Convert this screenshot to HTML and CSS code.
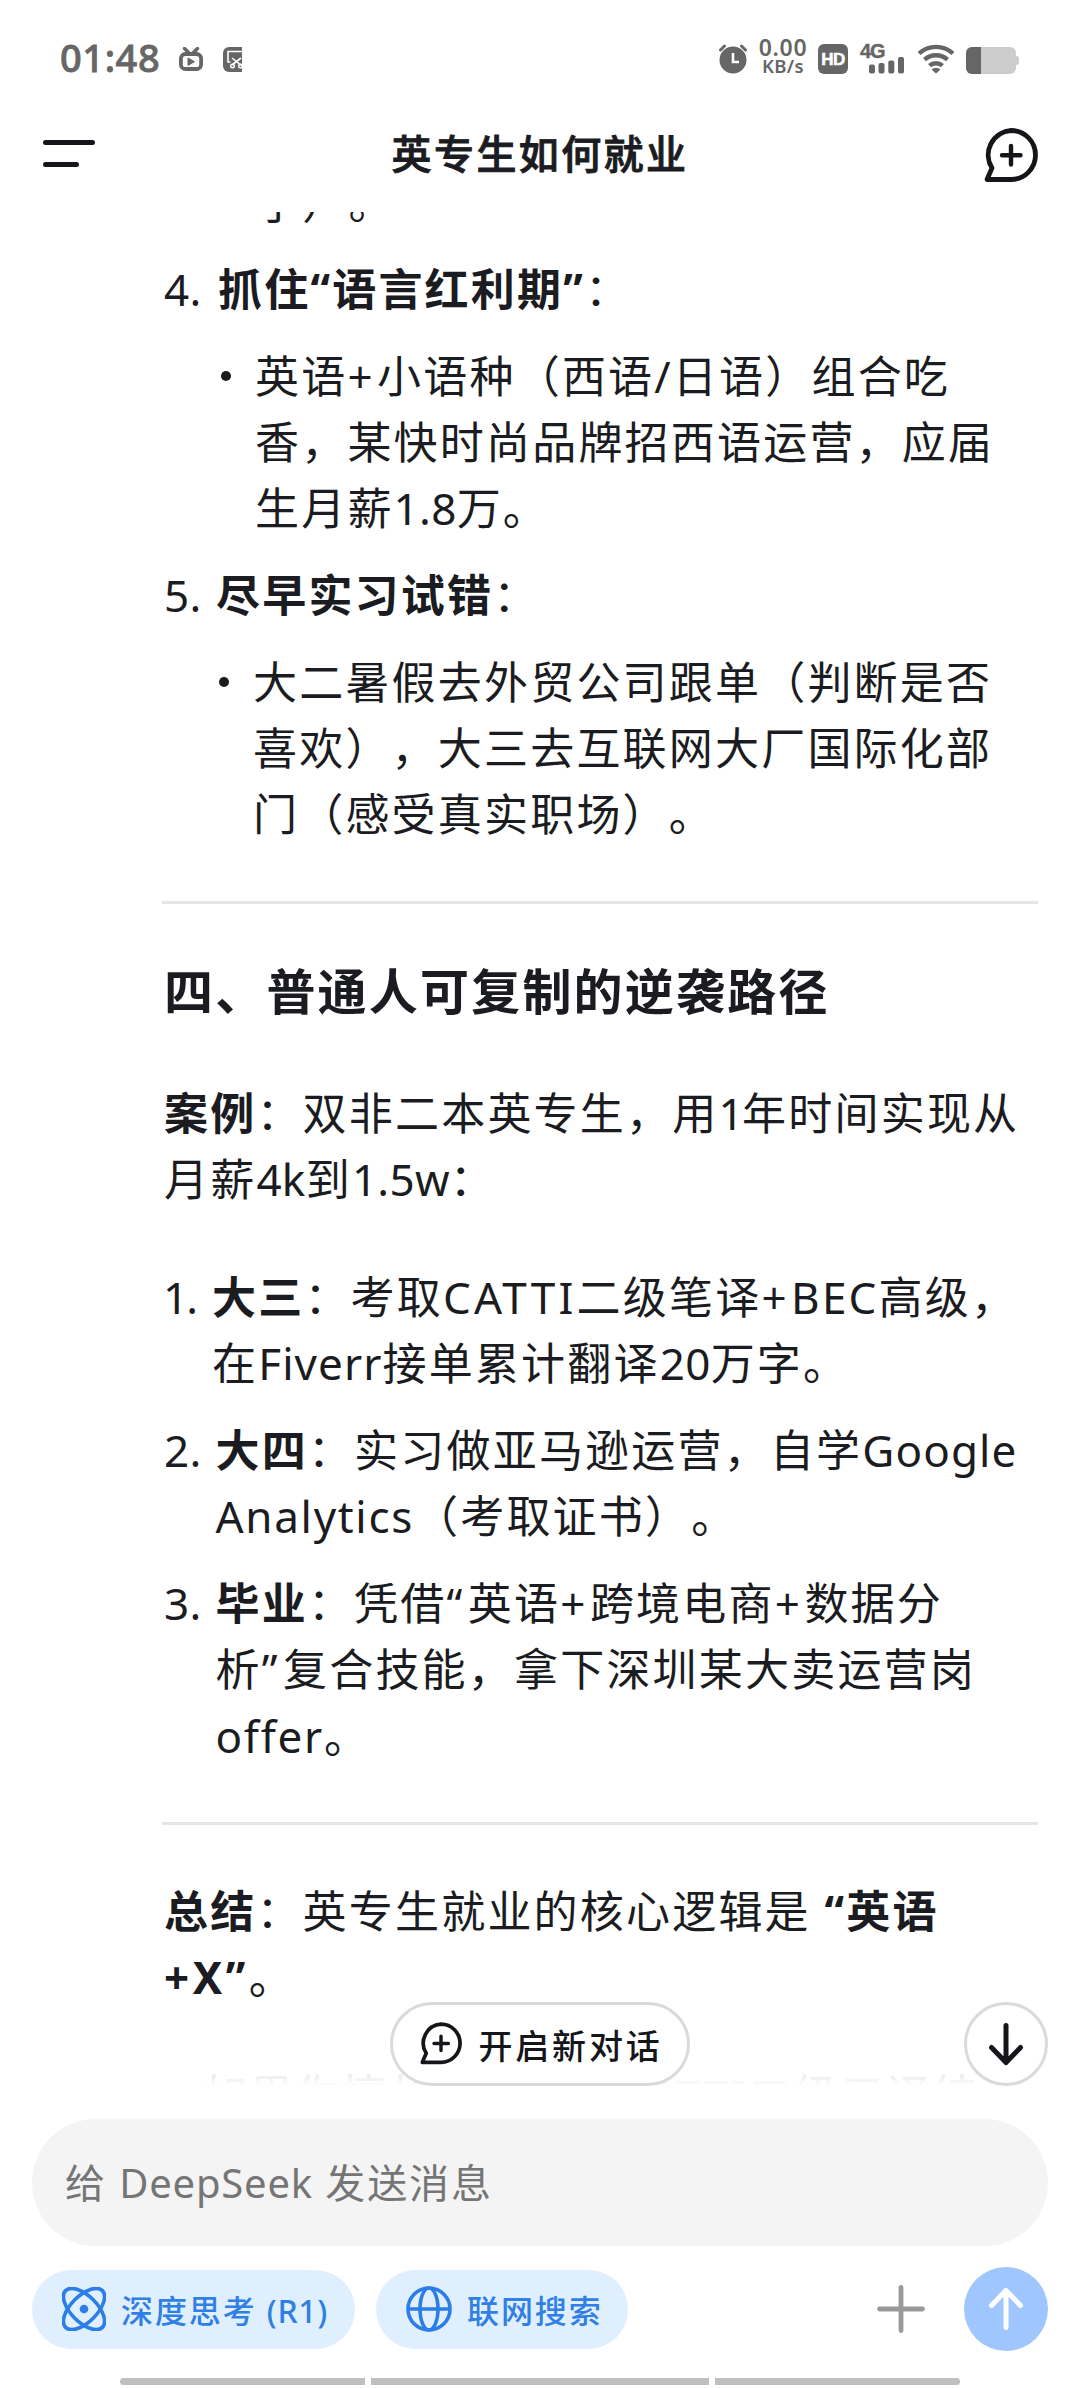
FILE: index.html
```html
<!DOCTYPE html>
<html lang="zh-CN">
<head>
<meta charset="utf-8">
<title>英专生如何就业</title>
<link rel="stylesheet" href="styles.css">
</head>
<body>
<div class="app">
  <div class="status">
    <span class="clock">01:48</span>
    <svg class="tv" width="24" height="24" viewBox="0 0 24 24"><path d="M5.500 1.500l5 5M18.500 1.500l-5 5" stroke="#666" stroke-width="3.400" stroke-linecap="round"/><rect x="1.900" y="7" width="20.200" height="15" rx="4.500" fill="none" stroke="#666" stroke-width="3.800"/><path d="M9 11v7.400l6.500-3.700z" fill="#666" stroke="#666" stroke-linejoin="round"/></svg>
    <svg class="snip" width="19" height="25" viewBox="0 0 19 25"><path d="M6 0h13v25H6a6 6 0 0 1-6-6V6a6 6 0 0 1 6-6z" fill="#666"/><path d="M19 4.500H5V15h2.500M9 11l10 8M18 11l-9 7" fill="none" stroke="#fff" stroke-width="1.600"/><circle cx="9.500" cy="19" r="1.800" fill="none" stroke="#fff" stroke-width="1.400"/><circle cx="17.500" cy="19" r="1.800" fill="none" stroke="#fff" stroke-width="1.400"/></svg>
    <span class="spacer"></span>
    <svg class="alarm" width="30" height="30" viewBox="0 0 30 30"><circle cx="15" cy="16" r="13.500" fill="#666"/><path d="M2.500 6l4-4M27.500 6l-4-4" stroke="#666" stroke-width="3" stroke-linecap="round"/><path d="M15 9v9h6" fill="none" stroke="#fff" stroke-width="2.600"/></svg>
    <span class="speed"><b>0.00</b><i>KB/s</i></span>
    <span class="hd">HD</span>
    <span class="cell"><b>4G</b><svg width="36" height="17" viewBox="0 0 36 17" fill="#666"><rect x="0" y="7.500" width="6" height="9" rx="2"/><rect x="9.500" y="6" width="6" height="10.500" rx="2"/><rect x="19.300" y="3.500" width="6" height="13" rx="2"/><rect x="29" y="0" width="6" height="16.500" rx="2"/></svg></span>
    <svg class="wifi" width="38" height="30" viewBox="0 0 38 30"><g fill="none" stroke="#666" stroke-width="4.400"><path d="M2 9.500a25 25 0 0 1 34 0"/><path d="M7.500 15.700a17 17 0 0 1 23 0"/><path d="M12.500 21.700a10 10 0 0 1 13 0"/></g><path d="M14.500 25.500q4.500-3.500 9 0L19 29.500z" fill="#666"/></svg>
    <span class="battery"><span class="level"></span></span>
  </div>
  <header class="header">
    <svg class="menu" width="54" height="28" viewBox="0 0 54 28"><path d="M3.500 2.500h47M3.500 24.500h31" stroke="#15161a" stroke-width="5" stroke-linecap="round"/></svg>
    <h1 class="title">英专生如何就业</h1>
    <svg class="new" width="54" height="56" viewBox="0 0 54 56"><path d="M27 2.500a24.500 24.500 0 1 1 0 49H3l5-11.500A24.500 24.500 0 0 1 27 2.500z" fill="none" stroke="#15161a" stroke-width="4.800" stroke-linejoin="round"/><path d="M27 18v18.500M18 27.300h18.500" stroke="#15161a" stroke-width="4.400" stroke-linecap="round"/></svg>
  </header>
  <main class="chat">
    <div class="answer">
      <p class="tail">了）。</p>
      <div class="item w4"><span class="num">4.</span><div class="body">
        <p><strong>抓住“语言红利期”</strong>：</p>
        <div class="bullet"><p>英语<span class="plus">+</span>小语种（西语/日语）组合吃<br>香，某快时尚品牌招西语运营，应届<br>生月薪<span class="digits">1.8</span>万。</p></div>
      </div></div>
      <div class="item w5"><span class="num">5.</span><div class="body">
        <p><strong>尽早实习试错</strong>：</p>
        <div class="bullet"><p>大二暑假去外贸公司跟单（判断是否<br>喜欢），大三去互联网大厂国际化部<br>门（感受真实职场）。</p></div>
      </div></div>
      <hr class="rule">
      <h2 class="heading">四、普通人可复制的逆袭路径</h2>
      <p class="para"><strong>案例</strong>：双非二本英专生，用<span class="one">1</span>年时间实现从<br>月薪<span class="digits">4k</span>到<span class="digits">1.5w</span>：</p>
      <div class="item w1"><span class="num">1.</span><p><strong>大三</strong>：考取<span class="caps">CATTI</span>二级笔译<span class="plus">+</span>BEC高级，<br>在<span class="latin">Fiverr</span>接单累计翻译<span class="digits">20</span>万字。</p></div>
      <div class="item w2"><span class="num">2.</span><p><strong>大四</strong>：实习做亚马逊运营，自学<span class="latin">Google</span><br><span class="word">Analytics</span>（考取证书）。</p></div>
      <div class="item w2"><span class="num">3.</span><p><strong>毕业</strong>：凭借<span class="quote">“</span>英语<span class="plus">+</span>跨境电商<span class="plus">+</span>数据分<br>析<span class="quote">”</span>复合技能，拿下深圳某大卖运营岗<br><span class="word">offer</span>。</p></div>
      <hr class="rule second">
      <p class="summary"><strong>总结</strong>：英专生就业的核心逻辑是 <strong>“英语<br><span class="wide">+X”</span></strong>。</p>
      <p class="next">如果你擅长考试，有CATTI二级口译结</p>
    </div>
    <div class="fade"></div>
    <button class="fresh"><svg width="42" height="44" viewBox="0 0 54 56"><path d="M27 2.500a24.500 24.500 0 1 1 0 49H3l5-11.500A24.500 24.500 0 0 1 27 2.500z" fill="none" stroke="#15161a" stroke-width="4.800" stroke-linejoin="round"/><path d="M27 18v18.500M18 27.300h18.500" stroke="#15161a" stroke-width="4.400" stroke-linecap="round"/></svg>开启新对话</button>
    <button class="down"><svg width="36" height="44" viewBox="0 0 36 44"><path d="M18 3.500v37M3.500 25.500L18 40.500l14.500-15" fill="none" stroke="#15161a" stroke-width="5" stroke-linecap="round" stroke-linejoin="round"/></svg></button>
  </main>
  <footer class="composer">
    <div class="input">给 <span class="brand">DeepSeek</span> 发送消息</div>
    <div class="tools">
      <button class="chip think"><svg width="44" height="44" viewBox="0 0 44 44"><g fill="none" stroke="#2b7de9" stroke-width="3.600"><ellipse cx="22" cy="22" rx="26" ry="13" transform="rotate(45 22 22)"/><ellipse cx="22" cy="22" rx="26" ry="13" transform="rotate(-45 22 22)"/></g><circle cx="22" cy="22" r="4.300" fill="#2b7de9"/></svg><span>深度思考 <span class="tight">(R1)</span></span></button>
      <button class="chip web"><svg width="46" height="46" viewBox="0 0 46 46"><g fill="none" stroke="#2b7de9" stroke-width="3.600"><circle cx="23" cy="23" r="21"/><ellipse cx="23" cy="23" rx="9" ry="21"/><path d="M2 23h42"/></g></svg>联网搜索</button>
      <svg class="add" width="48" height="48" viewBox="0 0 48 48"><path d="M24 2.500v43M2.500 24h43" stroke="#999" stroke-width="4.800" stroke-linecap="round"/></svg>
      <button class="send"><svg width="36" height="44" viewBox="0 0 36 44"><path d="M18 40.500v-37M3.500 18.500L18 3.500l14.500 15" fill="none" stroke="#fff" stroke-width="5" stroke-linecap="round" stroke-linejoin="round"/></svg></button>
    </div>
    <div class="navbar"><span></span><span></span><span></span></div>
  </footer>
</div>
</body>
</html>
```
FILE: styles.css
```css
* { box-sizing: border-box; }
body {
  margin: 0;
  background: #fff;
  color: #1b1c21;
  font-family: "Noto Sans", "Noto Sans CJK SC", sans-serif;
  text-spacing-trim: space-all;
}
p, h1, h2 { margin: 0; }
button {
  padding: 0;
  border: 0;
  font-family: inherit;
  background: none;
}
svg { display: block; flex: none; }

.app {
  display: flex;
  flex-direction: column;
  width: 1080px;
  height: 2388px;
  overflow: hidden;
}

/* status bar */
.status {
  display: flex;
  align-items: center;
  height: 118px;
  padding: 0 61px 0 60px;
  color: #666;
}
.clock { width: 119px; font-size: 38px; font-weight: 500; letter-spacing: .6px; line-height: 50px; margin-top: -4px; -webkit-text-stroke: .8px #666; }
.snip { margin-left: 20px; }
.spacer { flex: 1; }
.speed { display: flex; flex-direction: column; align-items: center; width: 54px; margin-left: 8px; margin-top: -4px; }
.speed b { font-size: 23px; font-weight: 600; line-height: 18px; letter-spacing: .7px; }
.speed i { font-size: 18.500px; font-style: normal; font-weight: 600; line-height: 20px; letter-spacing: .3px; }
.hd {
  width: 30px;
  height: 30px;
  margin-left: 8px;
  border-radius: 6px;
  background: #666;
  color: #fff;
  font: bold 17px/31px "Liberation Sans", sans-serif;
  text-align: center;
  letter-spacing: -.5px;
  -webkit-text-stroke: .5px #fff;
}
.cell { display: flex; flex-direction: column; margin-left: 12px; height: 30px; width: 44px; }
.cell b { font: bold 20px/15px "Liberation Sans", sans-serif; letter-spacing: -1px; height: 13px; -webkit-text-stroke: .4px #666; }
.cell svg { margin-left: 9px; }
.wifi { margin-left: 13px; }
.battery {
  position: relative;
  width: 50px;
  height: 27px;
  margin: 3px 3px 0 11px;
  border-radius: 6px;
  background: #ccc;
}
.battery::after {
  content: "";
  position: absolute;
  left: 49px;
  top: 9px;
  width: 4px;
  height: 9px;
  border-radius: 0 3px 3px 0;
  background: #ccc;
}
.level { display: block; width: 15px; height: 27px; border-radius: 6px 0 0 6px; background: #666; }

/* title bar */
.header {
  display: flex;
  align-items: center;
  justify-content: space-between;
  height: 94px;
  padding: 0 42px 22px 42px;
}
.title { font-size: 40px; font-weight: 500; letter-spacing: 2.400px; line-height: 58px; -webkit-text-stroke: .9px #1b1c21; }
.new { margin-top: 3px; }

/* conversation */
.chat {
  position: relative;
  height: 1874px;
  overflow: hidden;
}
.answer {
  padding: 0 0 0 164px;
  margin-top: -43px;
  font-size: 44px;
  line-height: 66.200px;
  letter-spacing: 2.200px;
  white-space: nowrap;
}
.tail { padding-left: 92px; }
.item { display: flex; margin-top: 20.600px; }
.num { flex: none; width: 52px; letter-spacing: .4px; }
.w1 .num { width: 48px; text-indent: -1px; letter-spacing: -2px; }
.w2 .num { width: 51.500px; }
.w4 .num { width: 54px; }
.bullet { display: flex; margin-top: 20.600px; }
.bullet::before {
  content: "";
  width: 10px;
  height: 10px;
  margin: 28px 24px 0 4px;
  border-radius: 50%;
  background: #1b1c21;
}
.w4 .bullet { margin-left: -1px; }
.w5 .bullet { margin-left: -1px; }
.plus { letter-spacing: 4.500px; }
.quote { letter-spacing: 5.500px; }
.digits { letter-spacing: .3px; }
.one { letter-spacing: -1.500px; }
.caps { letter-spacing: 3.200px; }
.latin { letter-spacing: 1.100px; }
.word { letter-spacing: 1.700px; }
.wide { letter-spacing: 3.500px; }
.rule { width: 876px; height: 3px; margin: 53.500px 0 0 -2px; border: 0; background: #e5e5e5; }
.heading { margin-top: 54.500px; font-size: 49px; line-height: 66px; letter-spacing: 2.200px; }
.para { margin: 56px 0 51.500px; }
.second { margin-top: 53px; }
.summary { margin-top: 53px; }
.next { margin-top: 52px; padding-left: 39px; color: #dedede; }
.fade {
  position: absolute;
  left: 0;
  right: 0;
  bottom: 0;
  height: 18px;
  background: linear-gradient(rgba(255, 255, 255, 0), #fff);
}

.fresh, .down {
  position: absolute;
  display: flex;
  align-items: center;
  justify-content: center;
  border: 3px solid #dadada;
  border-radius: 43px;
  background: #fff;
  color: #15161a;
}
.fresh { left: 390px; top: 1790px; width: 300px; height: 84px; gap: 17px; padding-left: 2px; font-size: 34px; font-weight: 500; letter-spacing: 2.800px; }
.down { left: 964px; top: 1790px; width: 84px; height: 84px; }

/* composer */
.composer { flex: 1; padding: 33px 32px 0; }
.input {
  height: 127px;
  padding-left: 33px;
  border-radius: 64px;
  background: #f4f4f4;
  color: #757575;
  font-size: 40px;
  line-height: 127px;
  letter-spacing: 1.900px;
}
.brand { letter-spacing: .8px; }
.tight { letter-spacing: .6px; }
.tools { display: flex; align-items: center; height: 84px; margin-top: 21px; }
.chip {
  display: flex;
  align-items: center;
  height: 79px;
  padding-left: 30px;
  gap: 15px;
  border-radius: 40px;
  background: #e0effe;
  color: #2f7fe4;
  font-size: 32px;
  font-weight: 500;
  letter-spacing: 1.900px;
  white-space: nowrap;
}
.think { width: 323px; }
.web { width: 252px; margin-left: 21px; }
.add { margin-left: auto; }
.send {
  display: flex;
  align-items: center;
  justify-content: center;
  width: 84px;
  height: 84px;
  margin-left: 39px;
  border-radius: 50%;
  background: #9fc6ff;
}
.navbar { display: flex; gap: 6px; margin: 27px 88px 0; }
.navbar span { height: 7px; flex: 245; background: #bfbfbf; }
.navbar span:nth-child(2) { flex: 338; }
.navbar span:first-child { border-radius: 4px 0 0 4px; }
.navbar span:last-child { border-radius: 0 4px 4px 0; }
```
